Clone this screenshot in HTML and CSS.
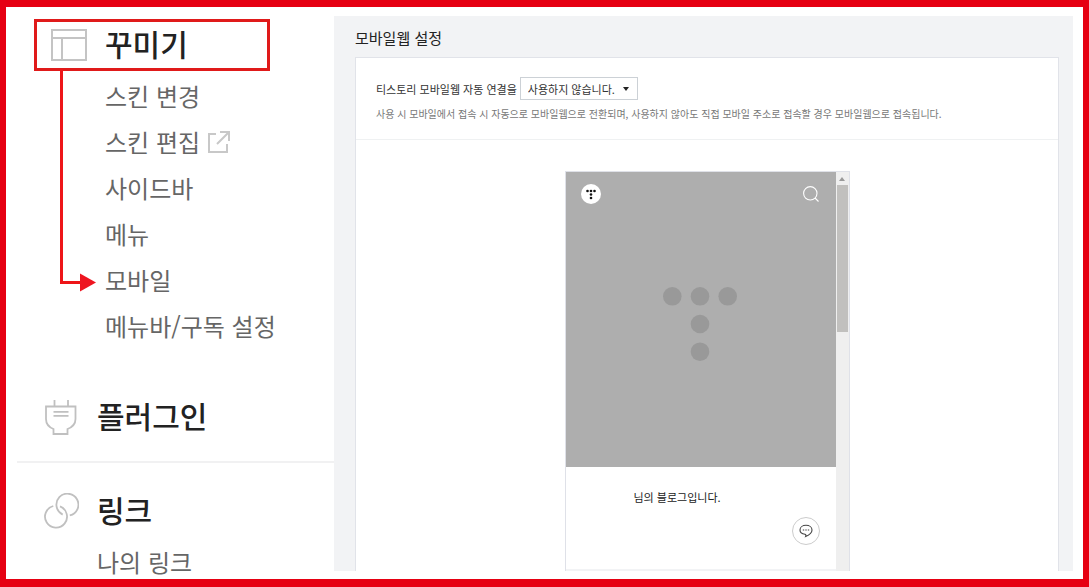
FILE: index.html
```html
<!DOCTYPE html>
<html lang="ko">
<head>
<meta charset="utf-8">
<meta name="viewport" content="width=device-width, initial-scale=1">
<title>모바일웹 설정</title>
<link rel="stylesheet" href="styles.css">
</head>
<body>
<div class="frame">
  <nav class="sidebar">
    <h2 class="group group-marked">
      <svg class="group-icon" width="36" height="32" viewBox="0 0 36 32" fill="none" stroke="#c4c4c4" stroke-width="2"><path d="M1 1h34v30H1zM1 9h34M11 9v22"/></svg>
      <span class="group-name">꾸미기</span>
    </h2>
    <ul class="items">
      <li><a href="#">스킨 변경</a></li>
      <li><a href="#">스킨 편집
        <svg class="external" width="22" height="22" viewBox="0 0 22 22" fill="none" stroke="#c8c8c8" stroke-width="2"><path d="M8 3H1v18h18v-8M12 1h9v9M21 1L9 13"/></svg></a></li>
      <li><a href="#">사이드바</a></li>
      <li><a href="#">메뉴</a></li>
      <li><a href="#">모바일</a></li>
      <li><a href="#">메뉴바/구독 설정</a></li>
    </ul>
    <h2 class="group group-plugin">
      <svg class="group-icon" width="36" height="36" viewBox="0 0 36 36" fill="none" stroke="#c0c0c0" stroke-width="1.8"><path d="M11.500 1v6.500M25 1v6.500M3 7.500h29.500v12.500q0 7-8 10v5h-14v-5q-7.500-3-7.500-10zM10.500 12.800h15M10.500 16.800h15"/></svg>
      <span class="group-name">플러그인</span>
    </h2>
    <h2 class="group group-link">
      <svg class="group-icon" width="36" height="36" viewBox="0 0 36 36" fill="none" stroke="#c0c0c0" stroke-width="1.800"><path d="M19.700 21.600A11 11 0 1 1 26.800 22.400M10.300 13A11 11 0 1 0 17 13.400"/></svg>
      <span class="group-name">링크</span>
    </h2>
    <ul class="items items-link">
      <li><a href="#">나의 링크</a></li>
    </ul>
    <svg class="pointer" width="38" height="224" viewBox="0 0 38 224"><path d="M3.500 0v213.500H23" fill="none" stroke="#ee1518" stroke-width="3"/><path d="M22 204.500l16 9-16 9z" fill="#ee1520"/></svg>
  </nav>

  <main class="content">
    <h1 class="title">모바일웹 설정</h1>
    <section class="card">
      <div class="setting">
        <div class="setting-row">
          <label for="redirect">티스토리 모바일웹 자동 연결을</label>
          <span class="select-wrap">
            <select id="redirect" class="select" aria-describedby="redirect-help">
              <option>사용하지 않습니다.</option>
              <option>사용합니다.</option>
            </select>
            <svg class="caret" width="6" height="4" viewBox="0 0 6 4"><path d="M0 0h6L3 4z" fill="#222"/></svg>
          </span>
        </div>
        <p id="redirect-help" class="help">사용 시 모바일에서 접속 시 자동으로 모바일웹으로 전환되며, 사용하지 않아도 직접 모바일 주소로 접속할 경우 모바일웹으로 접속됩니다.</p>
      </div>
      <div class="preview">
        <div class="screen">
          <div class="hero">
            <div class="hero-bar">
              <svg width="20" height="20" viewBox="0 0 20 20"><circle cx="10" cy="10" r="10" fill="#fff"/><g fill="#111"><circle cx="6.500" cy="7" r="1.300"/><circle cx="10" cy="7" r="1.300"/><circle cx="13.500" cy="7" r="1.300"/><circle cx="10" cy="10.500" r="1.300"/><circle cx="10" cy="14" r="1.300"/></g></svg>
              <button class="icon-button" type="button" aria-label="검색"><svg width="16" height="16" viewBox="0 0 16 16" fill="none" stroke="#fff" stroke-width="1.100"><circle cx="7.300" cy="7.300" r="6.700"/><path d="M12 12l3.500 3.500"/></svg></button>
            </div>
            <svg class="hero-logo" width="74" height="74" viewBox="0 0 74 74" fill="#999"><circle cx="9.300" cy="9.300" r="9.300"/><circle cx="37" cy="9.300" r="9.300"/><circle cx="64.700" cy="9.300" r="9.300"/><circle cx="37" cy="37" r="9.300"/><circle cx="37" cy="64.700" r="9.300"/></svg>
          </div>
          <div class="intro">
            <p class="intro-text">님의 블로그입니다.</p>
            <button class="chat" type="button" aria-label="댓글"><svg width="14" height="14" viewBox="0 0 14 14" fill="none" stroke="#444" stroke-width="1.100"><path d="M6 10.200C3 9.900 1 8.200 1 5.900 1 3.200 3.600 1.300 7 1.300s6 1.900 6 4.600c0 2.600-2.500 4.900-6.300 6.500.5-1 .3-1.700-.7-2.200z"/><path d="M3.800 6h1.400M6.300 6h1.400M8.800 6h1.400"/></svg></button>
          </div>
        </div>
        <div class="scrollbar">
          <svg width="6" height="4" viewBox="0 0 6 4"><path d="M0 4h6L3 0z" fill="#999"/></svg>
          <div class="thumb"></div>
        </div>
      </div>
    </section>
  </main>
</div>
</body>
</html>
```
FILE: styles.css
```css
* {
  box-sizing: border-box;
}

body {
  margin: 0;
  font-family: "Noto Sans CJK KR", sans-serif;
  color: #222;
  background: #fff;
}

h1, h2, p, ul {
  margin: 0;
  padding: 0;
}

ul {
  list-style: none;
}

svg {
  display: block;
  flex: none;
}

button {
  padding: 0;
  border: 0;
  background: none;
}

.frame {
  display: grid;
  grid-template-columns: 317px 1fr;
  min-height: 100vh;
  padding: 9px 10px 0 11px;
  border: solid #e60012;
  border-width: 7px 6px 8px;
}

/* Sidebar */

.sidebar {
  position: relative;
}

.group {
  display: flex;
  align-items: center;
  height: 44px;
  padding-left: 26px;
  gap: 18px;
  font-size: 30px;
  font-weight: 500;
  line-height: 40px;
}

.group-name {
  padding-bottom: 4px;
}

.group-marked {
  width: 236px;
  height: 52px;
  margin: 3px 0 2px 17px;
  padding-left: 14px;
  border: 3px solid #e01a1a;
}

.group-plugin {
  margin: 46px 0 22px;
}

.group-link {
  position: relative;
  margin: 50px 0 14px;
}

.group-link::before {
  content: "";
  position: absolute;
  top: -28px;
  left: 0;
  right: 0;
  border-top: 2px solid #f1f1f2;
}

.items {
  padding-left: 88px;
  font-size: 24px;
  line-height: 46px;
}

.items a {
  display: flex;
  align-items: center;
  gap: 8px;
  color: #666;
  text-decoration: none;
}

.items-link {
  padding-left: 80px;
  line-height: 30px;
}

.pointer {
  position: absolute;
  top: 53px;
  left: 41px;
}

/* Settings */

.content {
  display: flex;
  flex-direction: column;
  min-width: 0;
  margin-bottom: 8px;
  padding: 10px 14px 0 21px;
  background: #f2f3f5;
}

.title {
  margin-bottom: 7px;
  font-size: 15px;
  font-weight: 400;
  line-height: 24px;
}

.card {
  display: flex;
  flex: 1;
  flex-direction: column;
  border: 1px solid #e1e3e9;
  border-bottom: 0;
  background: #fff;
}

.setting {
  padding: 19px 20px 16px;
  border-bottom: 1px solid #eff1f2;
}

.setting-row {
  display: flex;
  align-items: center;
  gap: 3px;
  margin-bottom: 5px;
  font-size: 11px;
  color: #333;
}

.select-wrap {
  position: relative;
}

.select {
  display: block;
  width: 118px;
  height: 23px;
  padding: 0 7px;
  border: 1px solid #ccd1d6;
  border-radius: 0;
  appearance: none;
  background: #fff;
  color: #333;
  font: inherit;
}

.caret {
  position: absolute;
  top: 10px;
  right: 9px;
  pointer-events: none;
}

.help {
  color: #777;
  font-size: 10px;
  line-height: 18px;
}

/* Phone preview */

.preview {
  display: flex;
  flex: 1;
  width: 285px;
  max-width: 100%;
  margin: 31px auto 0;
  border: 1px solid #dfe1e8;
  border-bottom: 0;
}

.screen {
  display: flex;
  flex: 1;
  flex-direction: column;
}

.hero {
  padding: 12px 17px 106px 15px;
  background: #aeaeae;
}

.hero-bar {
  display: flex;
  align-items: center;
  justify-content: space-between;
  margin-bottom: 83px;
}

.hero-logo {
  margin: 0 auto;
}

.intro {
  display: flex;
  flex: 1;
  flex-direction: column;
  padding: 20px 16px 22px;
  border-bottom: 2px solid #f2f3f5;
}

.intro-text {
  padding-left: 52px;
  font-size: 11px;
  line-height: 20px;
}

.chat {
  display: grid;
  place-items: center;
  width: 28px;
  height: 28px;
  margin-top: 10px;
  margin-left: auto;
  border: 1px solid #ccc;
  border-radius: 50%;
}

.scrollbar {
  display: flex;
  flex-direction: column;
  align-items: center;
  width: 13px;
  padding: 5px 1px 0;
  gap: 4px;
  background: #efefef;
}

.thumb {
  width: 100%;
  height: 147px;
  background: #c1c0be;
}
```
